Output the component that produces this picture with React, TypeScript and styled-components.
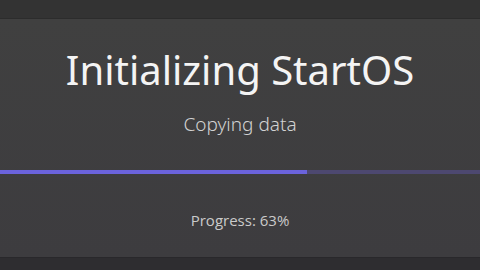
import React from 'react'
import styled, { createGlobalStyle } from 'styled-components'

const Global = createGlobalStyle`
  html, body {
    margin: 0;
    padding: 0;
    background: #2e2d30;
  }
  #root {
    height: 270px;
  }
`

const Page = styled.div`
  width: 480px;
  height: 270px;
  display: flex;
  flex-direction: column;
  overflow: hidden;
`

const TopBar = styled.div`
  height: 18px;
  background: #333333;
  border-bottom: 1px solid #2c2c2c;
`

const Panel = styled.main`
  flex: 1;
  display: flex;
  flex-direction: column;
  align-items: center;
  background: linear-gradient(#404040, #3d3c3f);
`

const Title = styled.h1`
  margin: 27px 0 0;
  font-family: 'Noto Sans', sans-serif;
  font-weight: 400;
  font-size: 40px;
  line-height: 48px;
  color: #f4f4f4;
`

const Subtitle = styled.p`
  margin: 19px 0 0;
  font-family: 'Noto Sans', sans-serif;
  font-weight: 300;
  font-size: 19px;
  line-height: 22px;
  color: #d2d2d2;
`

const Track = styled.div`
  align-self: stretch;
  margin-top: 35px;
  height: 4px;
  background: #4d4870;
`

const Fill = styled.div`
  height: 100%;
  background: #6b63dc;
`

const Status = styled.p`
  margin: 36px 0 0;
  font-family: 'Open Sans', sans-serif;
  font-size: 15px;
  line-height: 20px;
  color: #cacaca;
`

const Footer = styled.div`
  height: 12px;
  background: #2e2d30;
  border-top: 1px solid #29282b;
`

export default function App() {
  const progress = 0.64
  return (
    <>
      <Global />
      <Page>
        <TopBar />
        <Panel>
          <Title>Initializing StartOS</Title>
          <Subtitle>Copying data</Subtitle>
          <Track>
            <Fill style={{ width: `${progress * 100}%` }} />
          </Track>
          <Status>Progress: 63%</Status>
        </Panel>
        <Footer />
      </Page>
    </>
  )
}
